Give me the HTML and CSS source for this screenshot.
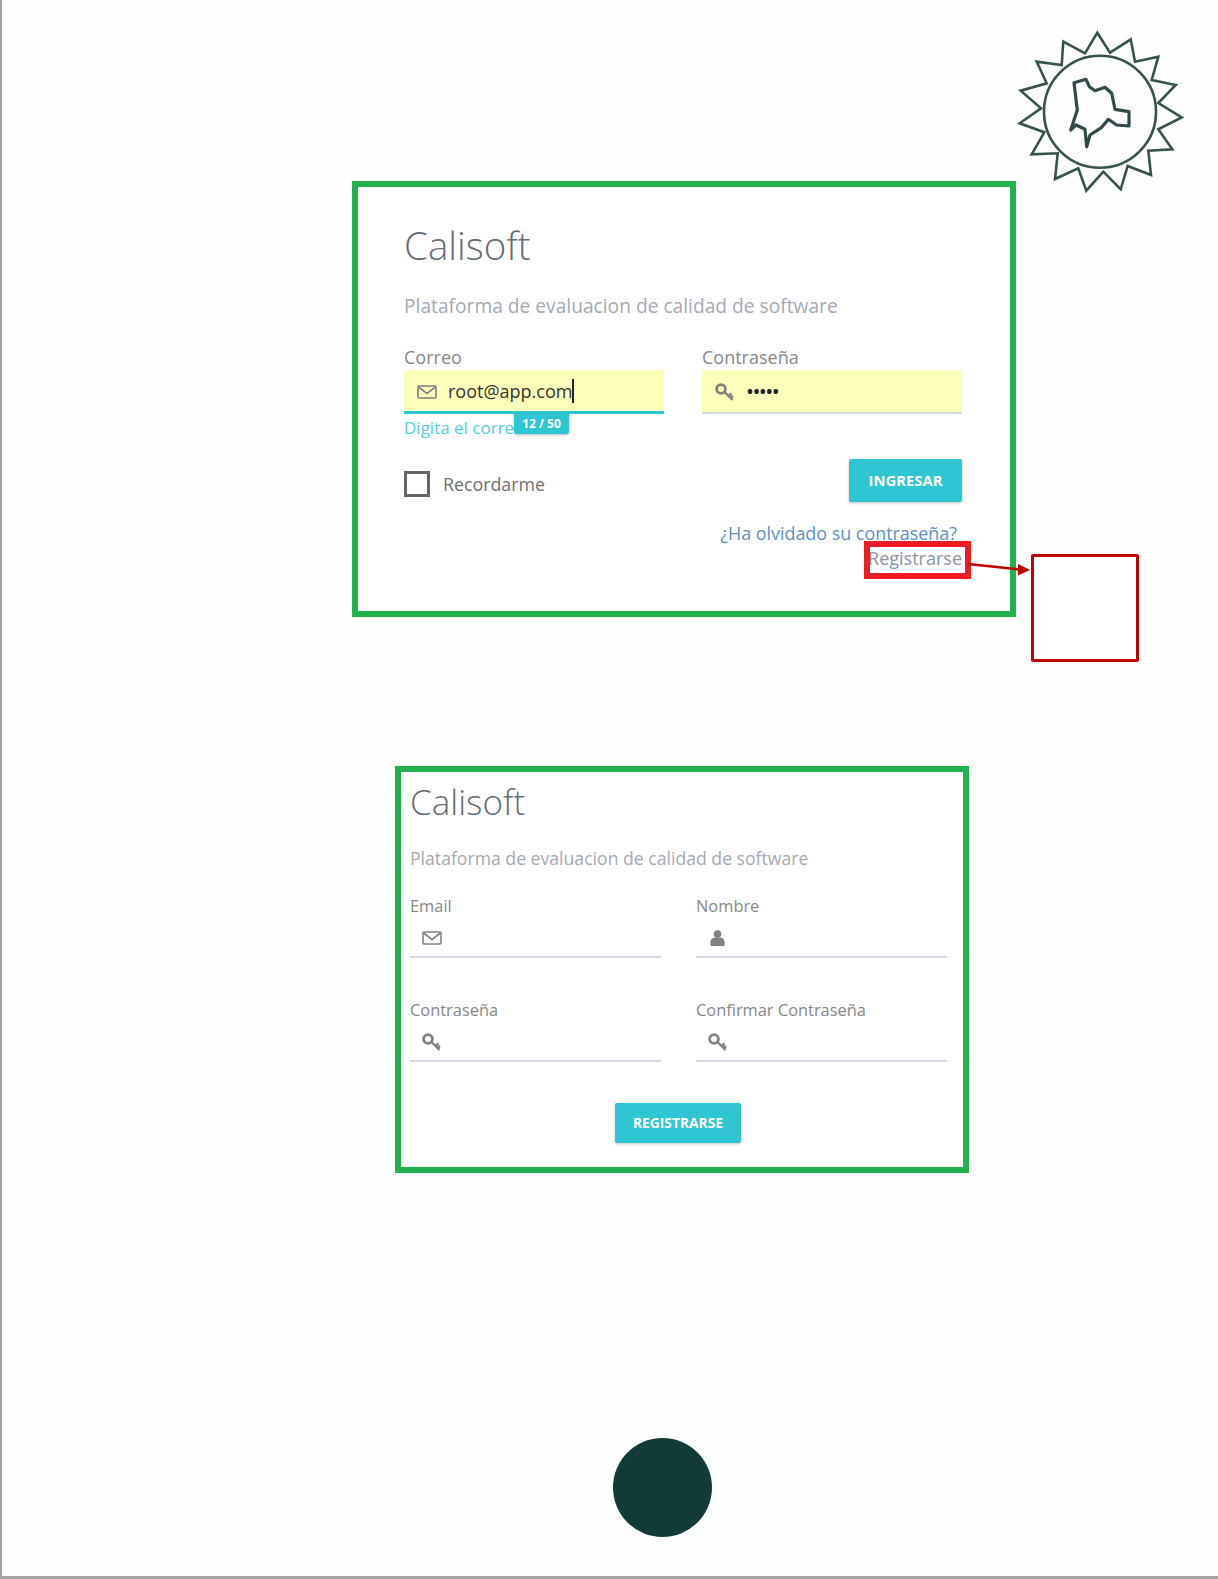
FILE: index.html
```html
<!DOCTYPE html>
<html lang="en">
<head>
    <meta charset="UTF-8">
    <meta name="viewport" content="width=device-width, initial-scale=1.0">
    <title>Calisoft</title>
    <link rel="stylesheet" href="styles.css">
</head>
<body>
<svg class="sprite" aria-hidden="true">
    <symbol id="icon-mail" viewBox="0 0 20 14">
        <rect x="1" y="1" width="18" height="12" rx="1" fill="none" stroke="currentColor" stroke-width="1.6"/>
        <path d="M1.5 2 L10 8.5 L18.5 2" fill="none" stroke="currentColor" stroke-width="1.6"/>
    </symbol>
    <symbol id="icon-key" viewBox="0 0 19 18">
        <circle cx="6" cy="6" r="4.400" fill="none" stroke="currentColor" stroke-width="2.8"/>
        <path d="M9.500 9 L17.500 17 M13.500 13 L16.500 10.500 M15.500 15 L18 13" fill="none" stroke="currentColor" stroke-width="2.4"/>
    </symbol>
    <symbol id="icon-user" viewBox="0 0 15 16">
        <circle cx="7.5" cy="4" r="3.8" fill="currentColor"/>
        <path d="M0.5 16 V11.5 C0.5 9 3 8 4.5 7.5 H10.5 C12 8 14.500 9 14.500 11.5 V16 Z" fill="currentColor"/>
    </symbol>
</svg>

<div class="page">
    <!-- Logo -->
    <svg class="logo" viewBox="1015 28 172 168">
        <polygon class="logo-line" points="1097.3,32.7 1110,52.700 1130.7,39.3 1135,61.7 1158.3,56.7 1151.7,80 1175.7,85 1158.3,103 1181.7,117.3 1158.3,129.3 1172.3,149.3 1148.3,150.7 1151,175 1127.7,166 1120.7,189.3 1103.3,171.7 1086.3,190.7 1078.3,168.3 1055,179 1057.7,153.3 1031.700,154.3 1044.3,132.3 1019.7,123.3 1041,108.3 1020.7,90.7 1046.7,83.3 1036.7,61.7 1061.7,65 1063.3,41.7 1085,53.3"/>
        <circle class="logo-line" cx="1100" cy="111.7" r="56"/>
        <polygon class="logo-map" points="1074,82.7 1086,79.3 1089.3,86.7 1095,90.7 1105,87.3 1111.7,93.3 1115,109.3 1129,111.7 1129,126 1116.7,125 1108.3,119.3 1101.7,127.3 1090,135 1086.7,146.7 1085,129.3 1076,125 1070.7,130 1077.3,110"/>
    </svg>

    <!-- Login -->
    <div class="card card-login">
        <h1 class="card-title">Calisoft</h1>
        <p class="card-subtitle">Plataforma de evaluacion de calidad de software</p>

        <div class="form-grid">
            <div class="form-group">
                <label class="form-label">Correo</label>
                <div class="form-field filled focused">
                    <svg class="icon icon-mail"><use href="#icon-mail"/></svg>
                    <span class="field-value">root@app.com</span>
                    <span class="field-counter">12 / 50</span>
                </div>
                <div class="field-hint">Digita el correo</div>
            </div>
            <div class="form-group">
                <label class="form-label">Contraseña</label>
                <div class="form-field filled">
                    <svg class="icon icon-key"><use href="#icon-key"/></svg>
                    <span class="field-dots">•••••</span>
                </div>
            </div>
        </div>

        <div class="login-actions">
            <div class="remember">
                <span class="checkbox"></span>
                <span>Recordarme</span>
            </div>
            <button class="btn btn-login">INGRESAR</button>
        </div>

        <div class="login-links">
            <a class="link-forgot">¿Ha olvidado su contraseña?</a>
            <a class="link-register">Registrarse</a>
        </div>

        <!-- Annotations -->
        <div class="mark-register"></div>
        <svg class="mark-arrow" viewBox="0 0 62 15">
            <path d="M0 3 L52 8.500" stroke="#c00000" stroke-width="2.6" fill="none"/>
            <polygon points="62,9 50,3 50,14.500" fill="#c00000"/>
        </svg>
        <div class="mark-target"></div>
    </div>

    <!-- Register -->
    <div class="card card-register">
        <h1 class="card-title">Calisoft</h1>
        <p class="card-subtitle">Plataforma de evaluacion de calidad de software</p>

        <div class="form-grid">
            <div class="form-group">
                <label class="form-label">Email</label>
                <div class="form-field">
                    <svg class="icon icon-mail"><use href="#icon-mail"/></svg>
                </div>
            </div>
            <div class="form-group">
                <label class="form-label">Nombre</label>
                <div class="form-field">
                    <svg class="icon icon-user"><use href="#icon-user"/></svg>
                </div>
            </div>
            <div class="form-group">
                <label class="form-label">Contraseña</label>
                <div class="form-field">
                    <svg class="icon icon-key"><use href="#icon-key"/></svg>
                </div>
            </div>
            <div class="form-group">
                <label class="form-label">Confirmar Contraseña</label>
                <div class="form-field">
                    <svg class="icon icon-key"><use href="#icon-key"/></svg>
                </div>
            </div>
        </div>

        <button class="btn btn-register">REGISTRARSE</button>
    </div>

    <div class="end-dot"></div>
</div>
</body>
</html>
```

FILE: styles.css
```css
/* General Styles */
body {
    font-family: 'Open Sans', sans-serif;
    margin: 0;
    padding: 0;
    background: #fefefe;
    color: #666;
}

.sprite {
    display: none;
}

.page {
    position: relative;
    box-sizing: border-box;
    height: 1579px;
    overflow: hidden;
    border-left: 2px solid #a3a3a3;
    border-bottom: 3px solid #a3a3a3;
    padding-top: 181px;
}

/* Logo */
.logo {
    position: absolute;
    left: 1013px;
    top: 28px;
    width: 172px;
    height: 168px;
}

.logo-line {
    fill: none;
    stroke: #35524f;
    stroke-width: 2.6;
}

.logo-map {
    fill: none;
    stroke: #2f4a48;
    stroke-width: 3.2;
    stroke-linejoin: round;
}

/* Cards */
.card {
    position: relative;
    box-sizing: border-box;
    background: #fff;
    border: 6px solid #22b14c;
}

.card-title {
    margin: 0;
    line-height: 44px;
    font-weight: 300;
    color: #666c73;
}

.card-subtitle {
    margin: 0;
    color: #a5a9b3;
}

.form-label {
    display: block;
    line-height: 24px;
    color: #888;
}

.form-grid {
    display: grid;
}

.form-field {
    position: relative;
    display: flex;
    align-items: center;
    box-sizing: border-box;
    padding-top: 2px;
    border-bottom: 2px solid #d5d9e5;
    color: #80807c;
}

.form-field.filled {
    background: #fbffb9;
}

.form-field.focused {
    border-bottom: 3px solid #30c5d3;
}

.icon {
    flex: none;
}

.icon-mail {
    width: 20px;
    height: 14px;
}

.icon-key {
    width: 19px;
    height: 18px;
}

.icon-user {
    width: 15px;
    height: 16px;
}

.btn {
    display: block;
    padding: 0 0 2px;
    border: none;
    border-radius: 2px;
    background: #30c5d3;
    color: #fff;
    font-family: inherit;
    font-weight: 700;
    box-shadow: 0 1px 3px rgba(0, 0, 0, 0.25);
}

/* Login card */
.card-login {
    width: 664px;
    height: 436px;
    margin-left: 350px;
    padding: 36px 48px 0 46px;
}

.card-login .card-title {
    font-size: 38.5px;
}

.card-login .card-subtitle {
    margin-top: 25px;
    font-size: 19.2px;
    line-height: 28px;
}

.card-login .form-grid {
    grid-template-columns: 260px 260px;
    column-gap: 38px;
    margin-top: 25px;
}

.card-login .form-label {
    font-size: 18px;
    margin-bottom: 1px;
}

.card-login .form-field {
    height: 44px;
}

.card-login .icon-mail {
    margin-left: 13px;
    margin-right: 11px;
}

.card-login .icon-key {
    margin-left: 13px;
    margin-right: 13px;
}

.field-value {
    margin-top: -2px;
    border-right: 2px solid #222;
    font-size: 18px;
    line-height: 24px;
    color: #333;
}

.field-dots {
    margin-top: -2px;
    font-size: 16px;
    font-weight: 700;
    letter-spacing: 0.4px;
    color: #222;
}

.field-counter {
    position: absolute;
    left: 110px;
    top: 44px;
    width: 55px;
    height: 20px;
    border-radius: 0 0 3px 3px;
    background: #30c5d3;
    color: #fff;
    font-size: 12px;
    font-weight: 700;
    line-height: 19px;
    text-align: center;
    box-shadow: 0 1px 3px rgba(0, 0, 0, 0.3);
}

.field-hint {
    margin-top: 2px;
    font-size: 17px;
    line-height: 24px;
    color: #55cfdc;
}

.login-actions {
    display: flex;
    justify-content: space-between;
    align-items: center;
    margin-top: 19px;
}

.remember {
    display: flex;
    align-items: center;
    gap: 13px;
    padding-top: 6px;
    font-size: 17.8px;
    color: #707070;
}

.checkbox {
    box-sizing: border-box;
    width: 26px;
    height: 26px;
    border: 3px solid #666;
}

.btn-login {
    width: 113px;
    height: 43px;
    font-size: 14.800px;
}

.login-links {
    display: flex;
    flex-direction: column;
    align-items: flex-end;
    margin-top: 19px;
    font-size: 18px;
    line-height: 24px;
}

.link-forgot {
    margin-right: 5px;
    margin-bottom: 1px;
    font-size: 17.9px;
    color: #5c90c4;
}

.link-register {
    color: #8b94a2;
}

/* Annotations */
.mark-register {
    position: absolute;
    left: 506px;
    top: 354px;
    box-sizing: border-box;
    width: 107px;
    height: 38px;
    border: 6px solid #ed1c24;
}

.mark-arrow {
    position: absolute;
    left: 610px;
    top: 374px;
    width: 62px;
    height: 15px;
    overflow: visible;
}

.mark-target {
    position: absolute;
    left: 673px;
    top: 367px;
    box-sizing: border-box;
    width: 108px;
    height: 108px;
    border: 3px solid #c00000;
    border-radius: 2px;
    background: #fff;
}

/* Register card */
.card-register {
    width: 574px;
    height: 407px;
    margin-top: 149px;
    margin-left: 393px;
    padding: 8px 16px 0 9px;
}

.card-register .card-title {
    font-size: 35px;
}

.card-register .card-subtitle {
    margin-top: 22px;
    font-size: 17.64px;
    line-height: 24px;
}

.card-register .form-grid {
    grid-template-columns: 251px 251px;
    column-gap: 35px;
    row-gap: 40px;
    margin-top: 24px;
}

.card-register .form-label {
    font-size: 16.4px;
}

.card-register .form-field {
    height: 40px;
    padding-left: 12px;
}

.card-register .icon-user {
    margin-left: 2px;
}

.btn-register {
    width: 126px;
    height: 40px;
    margin: 41px 0 0 205px;
    font-size: 13.8px;
}

/* Bottom circle */
.end-dot {
    width: 99px;
    height: 99px;
    margin-top: 265px;
    margin-left: 611px;
    border-radius: 50%;
    background: #123b38;
}
```
